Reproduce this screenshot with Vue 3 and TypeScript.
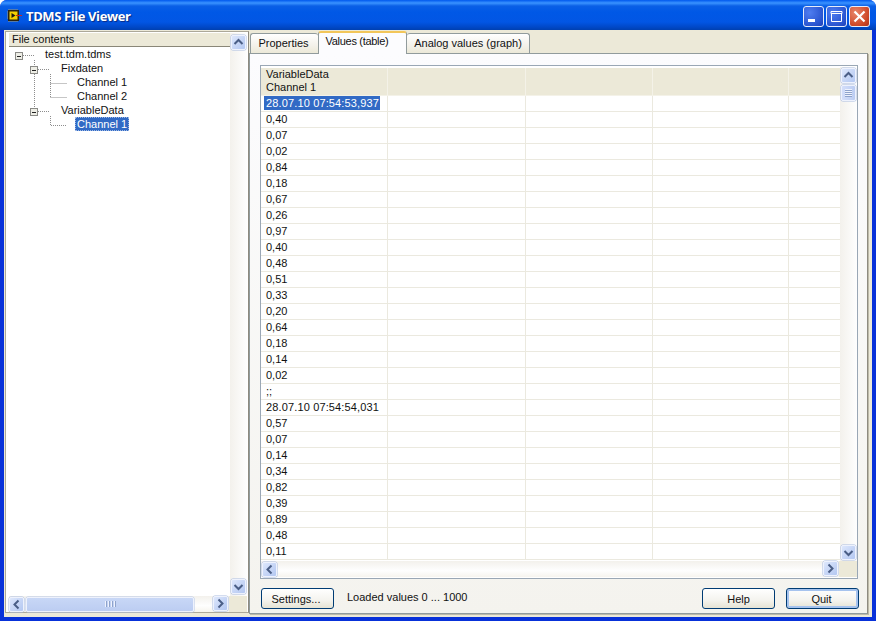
<script setup lang="ts">
const firstCols = [
  '28.07.10 07:54:53,937', '0,40', '0,07', '0,02', '0,84', '0,18', '0,67', '0,26', '0,97', '0,40',
  '0,48', '0,51', '0,33', '0,20', '0,64', '0,18', '0,14', '0,02', ';;', '28.07.10 07:54:54,031',
  '0,57', '0,07', '0,14', '0,34', '0,82', '0,39', '0,89', '0,48', '0,11',
]
const tree = [
  { label: 'test.tdm.tdms', level: 0, selected: false },
  { label: 'Fixdaten', level: 1, selected: false },
  { label: 'Channel 1', level: 2, selected: false },
  { label: 'Channel 2', level: 2, selected: false },
  { label: 'VariableData', level: 1, selected: false },
  { label: 'Channel 1', level: 2, selected: true },
]
const tabs = [
  { label: 'Properties', cls: 'tab-a', active: false },
  { label: 'Values (table)', cls: 'tab-b', active: true },
  { label: 'Analog values (graph)', cls: 'tab-c', active: false },
]
const chevrons: Record<string, string> = {
  up: 'M3.5 9 L7.5 5 L11.5 9',
  down: 'M3.5 6 L7.5 10 L11.5 6',
  left: 'M9.5 3.5 L5.5 7.5 L9.5 11.5',
  right: 'M5.5 3.5 L9.5 7.5 L5.5 11.5',
}
const boxes = [
  { x: 15, y: 52 },
  { x: 30, y: 66 },
  { x: 30, y: 108 },
]
</script>

<template>
  <div class="window">
    <header class="titlebar">
      <svg class="app-icon" width="16" height="16" viewBox="0 0 16 16">
        <rect x="2" y="2" width="11" height="11" fill="#2b2410" />
        <path d="M3 1v1M5 1v1M7 1v1M9 1v1M11 1v1M3 13v1M5 13v1M7 13v1M9 13v1M11 13v1M1 4h1M1 6h1M1 8h1M1 10h1" stroke="#a89c70" />
        <rect x="3.5" y="3.5" width="8" height="8" fill="#f4d000" />
        <path d="M5.5 5 L9.5 7.5 L5.5 10 Z" fill="#1a1a10" />
        <path d="M10 7.5 H16" stroke="#c8281e" stroke-width="1.2" />
      </svg>
      <span class="title-text">TDMS File Viewer</span>
      <div class="controls">
        <span class="ctrl">
          <svg width="21" height="21" viewBox="0 0 21 21"><rect x="5" y="13" width="7" height="3" fill="#fff" /></svg>
        </span>
        <span class="ctrl">
          <svg width="21" height="21" viewBox="0 0 21 21"><path d="M5 5.5h11v2H5zM5.5 7v8.5h10V7" fill="none" stroke="#fff" /></svg>
        </span>
        <span class="ctrl ctrl-close">
          <svg width="21" height="21" viewBox="0 0 21 21"><path d="M5.5 5.5 L15.5 15.5 M15.5 5.5 L5.5 15.5" stroke="#fff" stroke-width="2.2" /></svg>
        </span>
      </div>
    </header>

    <div class="client">
      <aside class="pane">
        <div class="pane-main">
          <div class="tree">
            <div class="tree-head">File contents</div>
            <ul class="tree-list">
              <li v-for="(n, i) in tree" :key="i" class="tree-row" :class="'lvl' + n.level">
                <span class="tree-label" :class="{ sel: n.selected }">{{ n.label }}</span>
              </li>
            </ul>
          </div>
          <div class="vscroll">
            <span class="sbtn"><svg width="15" height="15" viewBox="0 0 15 15"><path :d="chevrons.up" /></svg></span>
            <span class="sbtn"><svg width="15" height="15" viewBox="0 0 15 15"><path :d="chevrons.down" /></svg></span>
          </div>
        </div>
        <div class="hscroll pane-h">
          <span class="sbtn"><svg width="15" height="15" viewBox="0 0 15 15"><path :d="chevrons.left" /></svg></span>
          <span class="hthumb"><i></i><i></i><i></i><i></i></span>
          <span class="sbtn end"><svg width="15" height="15" viewBox="0 0 15 15"><path :d="chevrons.right" /></svg></span>
          <span class="corner"></span>
        </div>
        <svg class="connectors" width="70" height="100" viewBox="6 32 70 100">
          <path d="M23 55.5H35 M34.5 60V108 M38 69.5H50 M50.5 74V97.5 M50.5 83.5H67 M50.5 97.5H67 M38 111.5H50 M50.5 116V125.5H67" fill="none" stroke="#8d8d8d" stroke-dasharray="1 1" />
          <g v-for="(b, i) in boxes" :key="i">
            <rect :x="b.x + 0.5" :y="b.y + 0.5" width="7" height="7" fill="#eeeee6" stroke="#8a8a86" />
            <path :d="`M${b.x + 2} ${b.y + 4.5}h4`" stroke="#222" />
          </g>
        </svg>
      </aside>

      <section class="right-col">
        <nav class="tabs">
          <span v-for="t in tabs" :key="t.label" class="tab" :class="[t.cls, { active: t.active }]">{{ t.label }}</span>
        </nav>
        <div class="panel">
          <div class="table">
            <div class="table-main">
              <div class="grid">
                <div class="row head">
                  <div class="cell c1">VariableData<br />Channel 1</div>
                  <div class="cell c2"></div>
                  <div class="cell c3"></div>
                  <div class="cell c4"></div>
                  <div class="cell c5"></div>
                </div>
                <div v-for="(v, i) in firstCols" :key="i" class="row">
                  <div class="cell c1"><span :class="{ selcell: i === 0, stamp: v.length > 10 }">{{ v }}</span></div>
                  <div class="cell c2"></div>
                  <div class="cell c3"></div>
                  <div class="cell c4"></div>
                  <div class="cell c5"></div>
                </div>
              </div>
              <div class="vscroll tv">
                <span class="sbtn"><svg width="15" height="15" viewBox="0 0 15 15"><path :d="chevrons.up" /></svg></span>
                <span class="vthumb"><i></i><i></i><i></i><i></i></span>
                <span class="sbtn bottom"><svg width="15" height="15" viewBox="0 0 15 15"><path :d="chevrons.down" /></svg></span>
              </div>
            </div>
            <div class="hscroll table-h">
              <span class="sbtn"><svg width="15" height="15" viewBox="0 0 15 15"><path :d="chevrons.left" /></svg></span>
              <span class="sbtn end"><svg width="15" height="15" viewBox="0 0 15 15"><path :d="chevrons.right" /></svg></span>
              <span class="corner"></span>
            </div>
          </div>
          <footer class="footer">
            <button class="btn settings">Settings...</button>
            <span class="status">Loaded values 0 ... 1000</span>
            <button class="btn help">Help</button>
            <button class="btn quit">Quit</button>
          </footer>
        </div>
      </section>
    </div>
  </div>
</template>

<style>
html, body { background: #fff; }
</style>

<style scoped>
.window {
  width: 876px;
  height: 621px;
  box-sizing: border-box;
  display: flex;
  flex-direction: column;
  border-radius: 7px 7px 0 0;
  background: #0831d9;
  overflow: hidden;
  font: 11px "Liberation Sans", Arial, sans-serif;
  color: #111;
}
.titlebar {
  height: 30px;
  flex: none;
  display: flex;
  align-items: center;
  padding: 0 6px 0 6px;
  background: linear-gradient(180deg, #0058ee 0, #3a93ff 3px, #0a5fe6 6px, #0058e6 12px, #0256e4 22px, #0048c8 27px, #0040b0 30px);
}
.app-icon { margin-top: 1px; margin-right: 4px; }
.title-text {
  color: #fff;
  font: bold 13px "Open Sans", "Liberation Sans", sans-serif;
  letter-spacing: -0.4px;
  margin-top: 2px;
  text-shadow: 1px 1px 1px #0a2a80;
}
.controls { margin-left: auto; display: flex; gap: 2px; margin-top: 3px; }
.ctrl {
  width: 21px;
  height: 21px;
  border: 1px solid #e6ecfa;
  border-radius: 3px;
  box-sizing: border-box;
  display: flex;
  align-items: center;
  justify-content: center;
  background: radial-gradient(circle at 30% 30%, #4f7df0, #2a55d0 70%, #1c3fb8);
}
.ctrl svg { flex: none; }
.ctrl-close { background: radial-gradient(circle at 30% 30%, #e8866a, #cf4a2a 65%, #b03018); }
.client {
  flex: 1;
  margin: 0 4px 4px;
  background: #ece9d8;
  display: flex;
  align-items: flex-start;
}
.pane {
  position: relative;
  margin: 1px 0 0 1px;
  width: 244px;
  height: 582px;
  box-sizing: border-box;
  border: 1px solid #aca899;
  border-right-color: #8e8b80;
  background: #fff;
  padding: 1px 1px 0 3px;
}
.pane-main { display: flex; height: 563px; }
.tree { flex: 1; }
.tree-head {
  height: 13px;
  line-height: 13px;
  padding-left: 3px;
  background: #ece9d8;
  border-bottom: 1px solid #8a8778;
  font-size: 11px;
}
.tree-list { list-style: none; margin: 0; padding: 0; }
.tree-row { height: 14px; line-height: 14px; }
.lvl0 { padding-left: 34px; }
.lvl1 { padding-left: 50px; }
.lvl2 { padding-left: 66px; }
.tree-label { display: inline-block; padding: 0 2px; height: 14px; }
.tree-label.sel { background: #316ac5; color: #fff; outline: 1px dotted #9db8e4; outline-offset: -1px; }
.connectors { position: absolute; left: 0; top: 0; overflow: visible; pointer-events: none; }
.vscroll {
  width: 17px;
  flex: none;
  display: flex;
  flex-direction: column;
  justify-content: space-between;
  align-items: center;
  padding: 2px 0;
  box-sizing: border-box;
  background: linear-gradient(90deg, #f3f1ec, #fefefe);
}
.sbtn {
  width: 15px;
  height: 15px;
  flex: none;
  box-sizing: border-box;
  display: block;
  border-radius: 2px;
  border: 1px solid #eef2fd;
  background: linear-gradient(135deg, #dde7fc, #c3d3f5 60%, #b4c8f2);
  box-shadow: 0 0 0 0.5px #a9bce0;
}
.sbtn svg { display: block; margin: -1px; }
.sbtn path { fill: none; stroke: #4a5e86; stroke-width: 2; }
.hscroll {
  display: flex;
  align-items: center;
  height: 16px;
  position: relative;
  background: linear-gradient(180deg, #f3f1ec, #fefefe 60%, #f6f4ee);
}
.corner {
  background: #ece9d8;
  position: absolute;
  right: 0;
  top: 0;
  bottom: 0;
  width: 18px;
}
.hthumb {
  margin-left: 2px;
  width: 168px;
  height: 15px;
  box-sizing: border-box;
  border: 1px solid #eef2fd;
  border-radius: 2px;
  background: linear-gradient(180deg, #c8d7f6, #bccdf2);
  box-shadow: 0 0 0 0.5px #b5c6e6;
  display: flex;
  justify-content: center;
  align-items: center;
  gap: 1px;
}
.hthumb i { width: 1px; height: 6px; background: #eef2fd; box-shadow: 1px 0 0 #8ea3cc; margin-right: 1px; }
.sbtn.end { position: absolute; right: 19px; top: 0; }
.vthumb {
  width: 15px;
  height: 16px;
  margin-top: 2px;
  box-sizing: border-box;
  border: 1px solid #eef2fd;
  border-radius: 2px;
  background: linear-gradient(90deg, #d3defa, #bccdf2);
  box-shadow: 0 0 0 0.5px #a9bce0;
  display: flex;
  flex-direction: column;
  justify-content: center;
  align-items: center;
}
.vthumb i { width: 7px; height: 1px; background: #eef2fd; box-shadow: 0 1px 0 #8ea3cc; margin-bottom: 1px; }
.sbtn.bottom { margin-top: auto; }
.tv { justify-content: flex-start; height: 494px; padding: 1px 0 1px; }

.right-col { width: 619px; flex: none; display: flex; flex-direction: column; }
.tabs {
  height: 23px;
  display: flex;
  align-items: flex-end;
  padding-left: 1px;
  position: relative;
  z-index: 1;
}
.tab {
  height: 20px;
  line-height: 19px;
  box-sizing: border-box;
  text-align: center;
  border: 1px solid #919b9c;
  border-bottom: none;
  border-radius: 3px 3px 0 0;
  background: linear-gradient(180deg, #fff, #f3f1ea 60%, #ece9d8);
}
.tab-a { width: 68px; border-right: none; padding-right: 2px; }
.tab-b {
  width: 89px;
  height: 23px;
  line-height: 17px;
  margin-bottom: -1px;
  background: #fcfcfe;
  border-top: 2px solid #f2c65a;
  padding-right: 11px;
  letter-spacing: -0.3px;
}
.tab-c { width: 123px; border-left: none; }
.panel {
  width: 619px;
  height: 561px;
  box-sizing: border-box;
  border: 1px solid #919b9c;
  border-right-color: #8e8b80;
  box-shadow: 1px 1px 0 #bdbaa9;
  background: linear-gradient(180deg, #fcfcfe, #f4f3ee);
  padding: 11px 8px 0 10px;
}
.table {
  width: 598px;
  height: 514px;
  box-sizing: border-box;
  border: 1px solid #9aa7b5;
  background: #fff;
  padding-top: 1px;
}
.table-main { display: flex; height: 494px; }
.grid { flex: none; width: 579px; overflow: hidden; padding-top: 1px; }
.row { display: flex; height: 16px; }
.head { height: 28px; background: #ece9d8; }
.cell {
  height: 100%;
  box-sizing: border-box;
  border-right: 1px solid #ebe9df;
  border-bottom: 1px solid #ebe9df;
  padding-left: 5px;
  white-space: nowrap;
  line-height: 14px;
}
.head .cell { border-color: #f4f2e8; line-height: 13px; }
.c1 { width: 127px; }
.c2 { width: 138px; }
.c3 { width: 127px; }
.c4 { width: 136px; }
.c5 { width: 51px; border-right: none; }
.stamp { letter-spacing: 0.14px; }
.selcell {
  display: inline-block;
  background: #316ac5;
  color: #fff;
  margin-left: -2px;
  padding: 0 1px 0 2px;
  height: 14px;
}
.table-h { padding-left: 1px; }
.footer {
  display: flex;
  align-items: center;
  margin-top: 9px;
  padding-left: 1px;
}
.btn {
  width: 73px;
  height: 21px;
  padding: 0;
  box-sizing: border-box;
  border: 1px solid #003c74;
  border-radius: 3px;
  font: 11px "Liberation Sans", Arial, sans-serif;
  color: #111;
  background: linear-gradient(180deg, #fff, #f4f3ee 60%, #e6e3d4);
}
.settings { padding-right: 3px; }
.status { margin-left: 13px; margin-top: -3px; }
.help { margin-left: auto; margin-right: 11px; }
.quit { box-shadow: inset 0 0 0 2px #a6c3ee; padding-right: 2px; }
</style>
